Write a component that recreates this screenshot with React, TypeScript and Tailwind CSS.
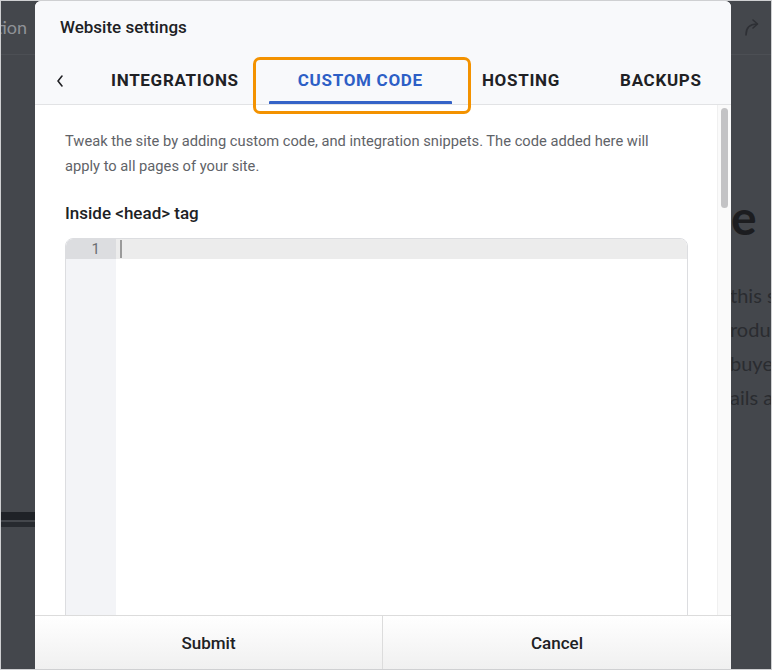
import React from "react";

export default function App() {
  const tab = "shrink-0 whitespace-nowrap px-[30px] flex items-center text-[17px] font-bold tracking-[0.7px] text-[#202124]";
  return (
    <div
      className="relative w-[772px] h-[670px] overflow-hidden border border-[#cfd0d2] bg-[#44474c] flex"
      style={{ fontFamily: "Roboto, 'Liberation Sans', sans-serif" }}
    >
      {/* left background strip */}
      <div className="w-[34px] shrink-0 flex flex-col">
        <div className="h-[54px] border-b border-[#4c4f54] flex items-center justify-end overflow-hidden pr-[8px]">
          <span className="text-[18px] text-[#8f9297] whitespace-nowrap" style={{ fontFamily: "Lato, sans-serif" }}>
            ration
          </span>
        </div>
        <div className="mt-[457px] h-[8px] bg-[#1f2227]" />
        <div className="mt-[2px] h-[5px] bg-[#272a2f]" />
      </div>

      {/* modal */}
      <div className="w-[696px] shrink-0 flex flex-col bg-white rounded-t-[6px] overflow-hidden">
        <div className="bg-[#f8f9fb] border-b border-[#e2e3e5] h-[104px] shrink-0 flex flex-col">
          <div className="pt-[14px] pl-[25px] h-[24px] box-content text-[17px] leading-[24px] font-medium text-[#202124]">
            Website settings
          </div>
          <div className="mt-[18px] h-[48px] flex overflow-hidden">
            <div className="w-[46px] shrink-0 flex items-center justify-center pl-[4px]">
              <svg width="10" height="14" viewBox="0 0 10 14" fill="none">
                <path d="M7 2 L3 7 L7 12" stroke="#202124" strokeWidth="1.6" strokeLinecap="round" strokeLinejoin="round" />
              </svg>
            </div>
            <div className={tab}>INTEGRATIONS</div>
            <div className="relative shrink-0 whitespace-nowrap px-[29px] flex items-center text-[17px] font-bold tracking-[0.7px] text-[#2d5fc6]">
              CUSTOM CODE
              <div className="absolute left-0 right-0 bottom-0 h-[3px] bg-[#3563c7] rounded-t-[1px]" />
            </div>
            <div className={tab}>HOSTING</div>
            <div className={tab}>BACKUPS</div>
          </div>
        </div>

        <div className="flex-1 flex min-h-0 overflow-hidden">
          <div className="flex-1 pl-[30px] pr-[29px] pt-[24px]">
            <p className="text-[14.7px] leading-[25px] text-[#5f6368] whitespace-nowrap">
              Tweak the site by adding custom code, and integration snippets. The code added here will
              <br />
              apply to all pages of your site.
            </p>
            <div className="mt-[22px] text-[17px] leading-[24px] font-medium text-[#202124]">Inside &lt;head&gt; tag</div>
            <div className="mt-[13px] h-[420px] border border-[#dcdde0] rounded-t-[8px] overflow-hidden flex">
              <div className="w-[50px] shrink-0 bg-[#f3f4f7] flex flex-col">
                <div className="h-[20px] bg-[#dcdde0] text-right pr-[16px] text-[15px] leading-[20px] text-[#6b6e73]">1</div>
              </div>
              <div className="flex-1 flex flex-col">
                <div className="h-[20px] bg-[#ececec] flex items-center pl-[4px]">
                  <div className="w-[1.5px] h-[18px] bg-[#9a9a9a]" />
                </div>
              </div>
            </div>
          </div>
          <div className="w-[14px] shrink-0 bg-[#fafafa] border-l border-[#f0f0f0] pt-[3px] flex justify-center">
            <div className="w-[7px] h-[100px] rounded-full bg-[#c3c3c5]" />
          </div>
        </div>

        <div className="h-[54px] shrink-0 border-t border-[#dcdcdc] flex">
          <div className="w-[348px] flex items-center justify-center bg-gradient-to-b from-white to-[#f0f0f0] border-r border-[#dcdcdc] text-[17px] font-medium text-[#202124] pt-[2px]">
            Submit
          </div>
          <div className="flex-1 flex items-center justify-center bg-gradient-to-b from-white to-[#f0f0f0] text-[17px] font-medium text-[#202124] pt-[2px]">
            Cancel
          </div>
        </div>
      </div>

      {/* right background strip */}
      <div className="flex-1 flex flex-col overflow-hidden" style={{ fontFamily: "Lato, sans-serif" }}>
        <div className="h-[54px] border-b border-[#4c4f54] flex items-center pl-[12px]">
          <svg width="18" height="20" viewBox="0 0 18 20" fill="none">
            <path d="M3 17 C3 10 7 6 14 6" stroke="#2e3035" strokeWidth="1.6" strokeLinecap="round" />
            <path d="M10 2 L14.5 6 L10 10" stroke="#2e3035" strokeWidth="1.6" strokeLinecap="round" strokeLinejoin="round" />
          </svg>
        </div>
        <div className="mt-[134px] text-[48px] leading-[56px] font-bold text-[#1c1d20] whitespace-nowrap">e</div>
        <div className="mt-[33px] flex flex-col text-[20px] leading-[34px] text-[#2a2c30] whitespace-nowrap -ml-[1px]">
          <span>this s</span>
          <span>rodu</span>
          <span>buye</span>
          <span>ails a</span>
        </div>
      </div>

      {/* orange annotation highlight */}
      <div className="absolute left-[252px] top-[56px] w-[218px] h-[57px] border-[3px] border-[#f39200] rounded-[7px] pointer-events-none" />
    </div>
  );
}
